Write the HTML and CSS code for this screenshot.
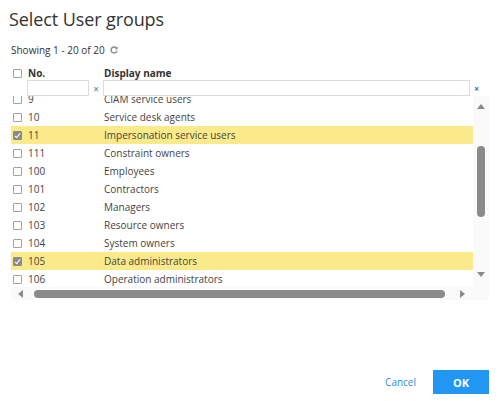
FILE: index.html
```html
<!DOCTYPE html>
<html>
<head>
<meta charset="utf-8">
<link rel="stylesheet" href="styles.css">
</head>
<body>
<div class="dialog">
  <h1 class="title">Select User groups</h1>
  <div class="showing">Showing 1 - 20 of 20
    <svg class="refresh" width="8" height="8" viewBox="0 0 8 8"><path d="M6.6 2.4A3 3 0 1 0 7 4.6" fill="none" stroke="#888" stroke-width="1.4"/><path d="M7.6 0.4V3.2H4.8Z" fill="#888"/></svg>
  </div>
  <div class="head">
    <span class="cb"></span>
    <span class="c-no">No.</span>
    <span class="c-name">Display name</span>
  </div>
  <div class="filters">
    <input class="f-no" type="text">
    <span class="clr">×</span>
    <input class="f-name" type="text">
    <span class="clr clr-blue">×</span>
  </div>
  <div class="grid">
    <div class="viewport">
      <div class="rows">
        <div class="row"><span class="cb"></span><span class="c-no">9</span><span class="c-name">CIAM service users</span></div>
        <div class="row"><span class="cb"></span><span class="c-no">10</span><span class="c-name">Service desk agents</span></div>
        <div class="row sel"><span class="cb on"></span><span class="c-no">11</span><span class="c-name">Impersonation service users</span></div>
        <div class="row"><span class="cb"></span><span class="c-no">111</span><span class="c-name">Constraint owners</span></div>
        <div class="row"><span class="cb"></span><span class="c-no">100</span><span class="c-name">Employees</span></div>
        <div class="row"><span class="cb"></span><span class="c-no">101</span><span class="c-name">Contractors</span></div>
        <div class="row"><span class="cb"></span><span class="c-no">102</span><span class="c-name">Managers</span></div>
        <div class="row"><span class="cb"></span><span class="c-no">103</span><span class="c-name">Resource owners</span></div>
        <div class="row"><span class="cb"></span><span class="c-no">104</span><span class="c-name">System owners</span></div>
        <div class="row sel"><span class="cb on"></span><span class="c-no">105</span><span class="c-name">Data administrators</span></div>
        <div class="row"><span class="cb"></span><span class="c-no">106</span><span class="c-name">Operation administrators</span></div>
      </div>
    </div>
    <div class="vbar">
      <span class="arr up"></span>
      <span class="vtrack"><span class="vthumb"></span></span>
      <span class="arr down"></span>
    </div>
    <div class="hbar">
      <span class="arr left"></span>
      <span class="hthumb"></span>
      <span class="arr right"></span>
    </div>
    <div class="corner"></div>
  </div>
  <div class="footer">
    <span class="cancel">Cancel</span>
    <button class="ok">OK</button>
  </div>
</div>
</body>
</html>
```
FILE: styles.css
```css
* { box-sizing: border-box; }
html, body { margin: 0; padding: 0; background: #fff; }
body {
  font-family: "Open Sans", "Liberation Sans", sans-serif;
  color: #444;
  font-size: 10px;
}
.dialog {
  width: 502px;
  height: 401px;
  padding: 0 13px 0 11px;
  display: flex;
  flex-direction: column;
}
.title {
  margin: 6px 0 0 -2px;
  font-size: 18px;
  line-height: 26px;
  font-weight: 400;
  color: #333;
  letter-spacing: -0.1px;
}
.showing {
  margin-top: 11px;
  line-height: 14px;
  color: #333;
  display: flex;
  align-items: center;
}
.refresh { margin-left: 5px; }
.head {
  margin-top: 9px;
  height: 14px;
  display: flex;
  align-items: center;
  font-weight: 700;
  color: #333;
}
.cb {
  width: 9px;
  height: 9px;
  border: 1px solid #a0a0a0;
  border-radius: 1px;
  margin-left: 2px;
  flex: none;
  background: #fff;
  position: relative;
}
.cb.on {
  background: #8a8a8a;
  border-color: #8a8a8a;
}
.cb.on::after {
  content: "";
  position: absolute;
  left: 2px;
  top: 0px;
  width: 2px;
  height: 5px;
  border: solid #fff;
  border-width: 0 1.5px 1.5px 0;
  transform: rotate(40deg);
}
.c-no { width: 76px; margin-left: 6px; flex: none; }
.c-name { white-space: nowrap; }
.filters {
  display: flex;
  align-items: center;
  height: 16px;
}
.filters input {
  height: 16px;
  border: 1px solid #dcdcdc;
  padding: 0;
  margin: 0;
  outline: none;
  background: #fff;
}
.f-no { width: 62px; margin-left: 16px !important; }
.f-name { width: 367px; }
.clr {
  width: 14px;
  text-align: center;
  color: #3a7ec8;
  font-size: 10px;
  line-height: 16px;
  padding-top: 2px;
}
.clr-blue { width: 11px; margin-left: 1px; color: #1f6fd0; font-weight: 700; font-size: 9px; }
.grid {
  display: grid;
  grid-template-columns: 462px 16px;
  grid-template-rows: 191px 13px;
}
.viewport { overflow: hidden; }
.rows { margin-top: -6px; }
.row {
  height: 18px;
  display: flex;
  align-items: center;
  color: #444;
}
.row.sel { background: #fbea8a; }
.vbar {
  background: #fafafa;
  display: flex;
  flex-direction: column;
  align-items: center;
  padding: 8px 0 10px;
}
.vtrack { flex: 1; width: 8px; padding-top: 37px; }
.vthumb {
  display: block;
  width: 8px;
  height: 71px;
  border-radius: 4px;
  background: #8a8a8a;
}
.arr { width: 0; height: 0; display: block; flex: none; }
.up { border-left: 4px solid transparent; border-right: 4px solid transparent; border-bottom: 5px solid #8a8a8a; }
.down { border-left: 4px solid transparent; border-right: 4px solid transparent; border-top: 5px solid #8a8a8a; }
.hbar {
  background: #fafafa;
  display: flex;
  align-items: center;
  padding: 0 7px 0 7px;
}
.left { border-top: 4px solid transparent; border-bottom: 4px solid transparent; border-right: 5px solid #8a8a8a; }
.right { border-top: 4px solid transparent; border-bottom: 4px solid transparent; border-left: 5px solid #8a8a8a; margin-left: 15px; }
.hthumb {
  display: block;
  margin-left: 11px;
  width: 411px;
  height: 8px;
  border-radius: 4px;
  background: #8a8a8a;
}
.corner { background: #fafafa; }
.footer {
  margin-top: auto;
  margin-bottom: 7px;
  display: flex;
  justify-content: flex-end;
  align-items: center;
}
.cancel {
  color: #2f8be6;
  font-size: 10px;
  margin-right: 17px;
}
.ok {
  width: 56px;
  height: 24px;
  border: 0;
  background: #2196f3;
  color: #fff;
  font-family: "Open Sans", "Liberation Sans", sans-serif;
  font-weight: 700;
  font-size: 11px;
  padding: 0;
}
```
